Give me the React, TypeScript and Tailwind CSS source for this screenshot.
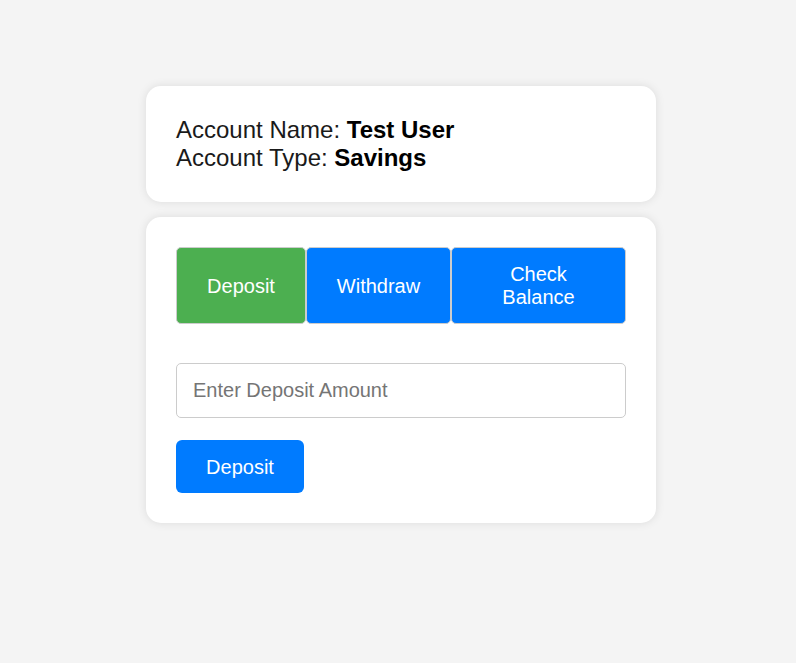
import { useState } from "react";

const tabs = [
  { key: "deposit", label: "Deposit", width: "w-[130px]" },
  { key: "withdraw", label: "Withdraw", width: "w-[145px]" },
  { key: "balance", label: "Check Balance", width: "flex-1" },
];

export default function App() {
  const [active, setActive] = useState("deposit");
  const [amount, setAmount] = useState("");

  return (
    <div className="min-h-screen bg-[#f4f4f4] pt-[86px] pl-[6px] flex flex-col items-center gap-[15px] font-['Liberation_Sans',Arial,sans-serif]">
      {/* Account info */}
      <div className="w-[510px] h-[116px] bg-white rounded-[15px] shadow-[0_0_10px_rgba(0,0,0,0.1)] px-[30px] pt-[30px] text-[24px] leading-[28px] text-[#1a1a1a]">
        <p>
          Account Name: <strong className="text-black">Test User</strong>
        </p>
        <p>
          Account Type: <strong className="text-black">Savings</strong>
        </p>
      </div>

      {/* Actions */}
      <div className="w-[510px] bg-white rounded-[15px] shadow-[0_0_10px_rgba(0,0,0,0.1)] p-[30px]">
        <div className="flex">
          {tabs.map((t) => (
            <button
              key={t.key}
              onClick={() => setActive(t.key)}
              className={`${t.width} h-[77px] pt-[1px] px-[40px] flex items-center justify-center text-center text-[20px] leading-[23px] text-white border border-[#ccc] rounded-[5px] ${
                active === t.key ? "bg-[#4caf50]" : "bg-[#007bff]"
              }`}
            >
              {t.label}
            </button>
          ))}
        </div>

        <input
          type="number"
          value={amount}
          onChange={(e) => setAmount(e.target.value)}
          placeholder="Enter Deposit Amount"
          className="mt-[39px] block w-full h-[55px] px-[16px] text-[20px] border border-[#ccc] rounded-[5px] placeholder:text-[#757575] outline-none"
        />

        <button className="mt-[22px] block w-[128px] h-[53px] bg-[#007bff] text-white text-[20px] rounded-[6px]">
          Deposit
        </button>
      </div>
    </div>
  );
}
